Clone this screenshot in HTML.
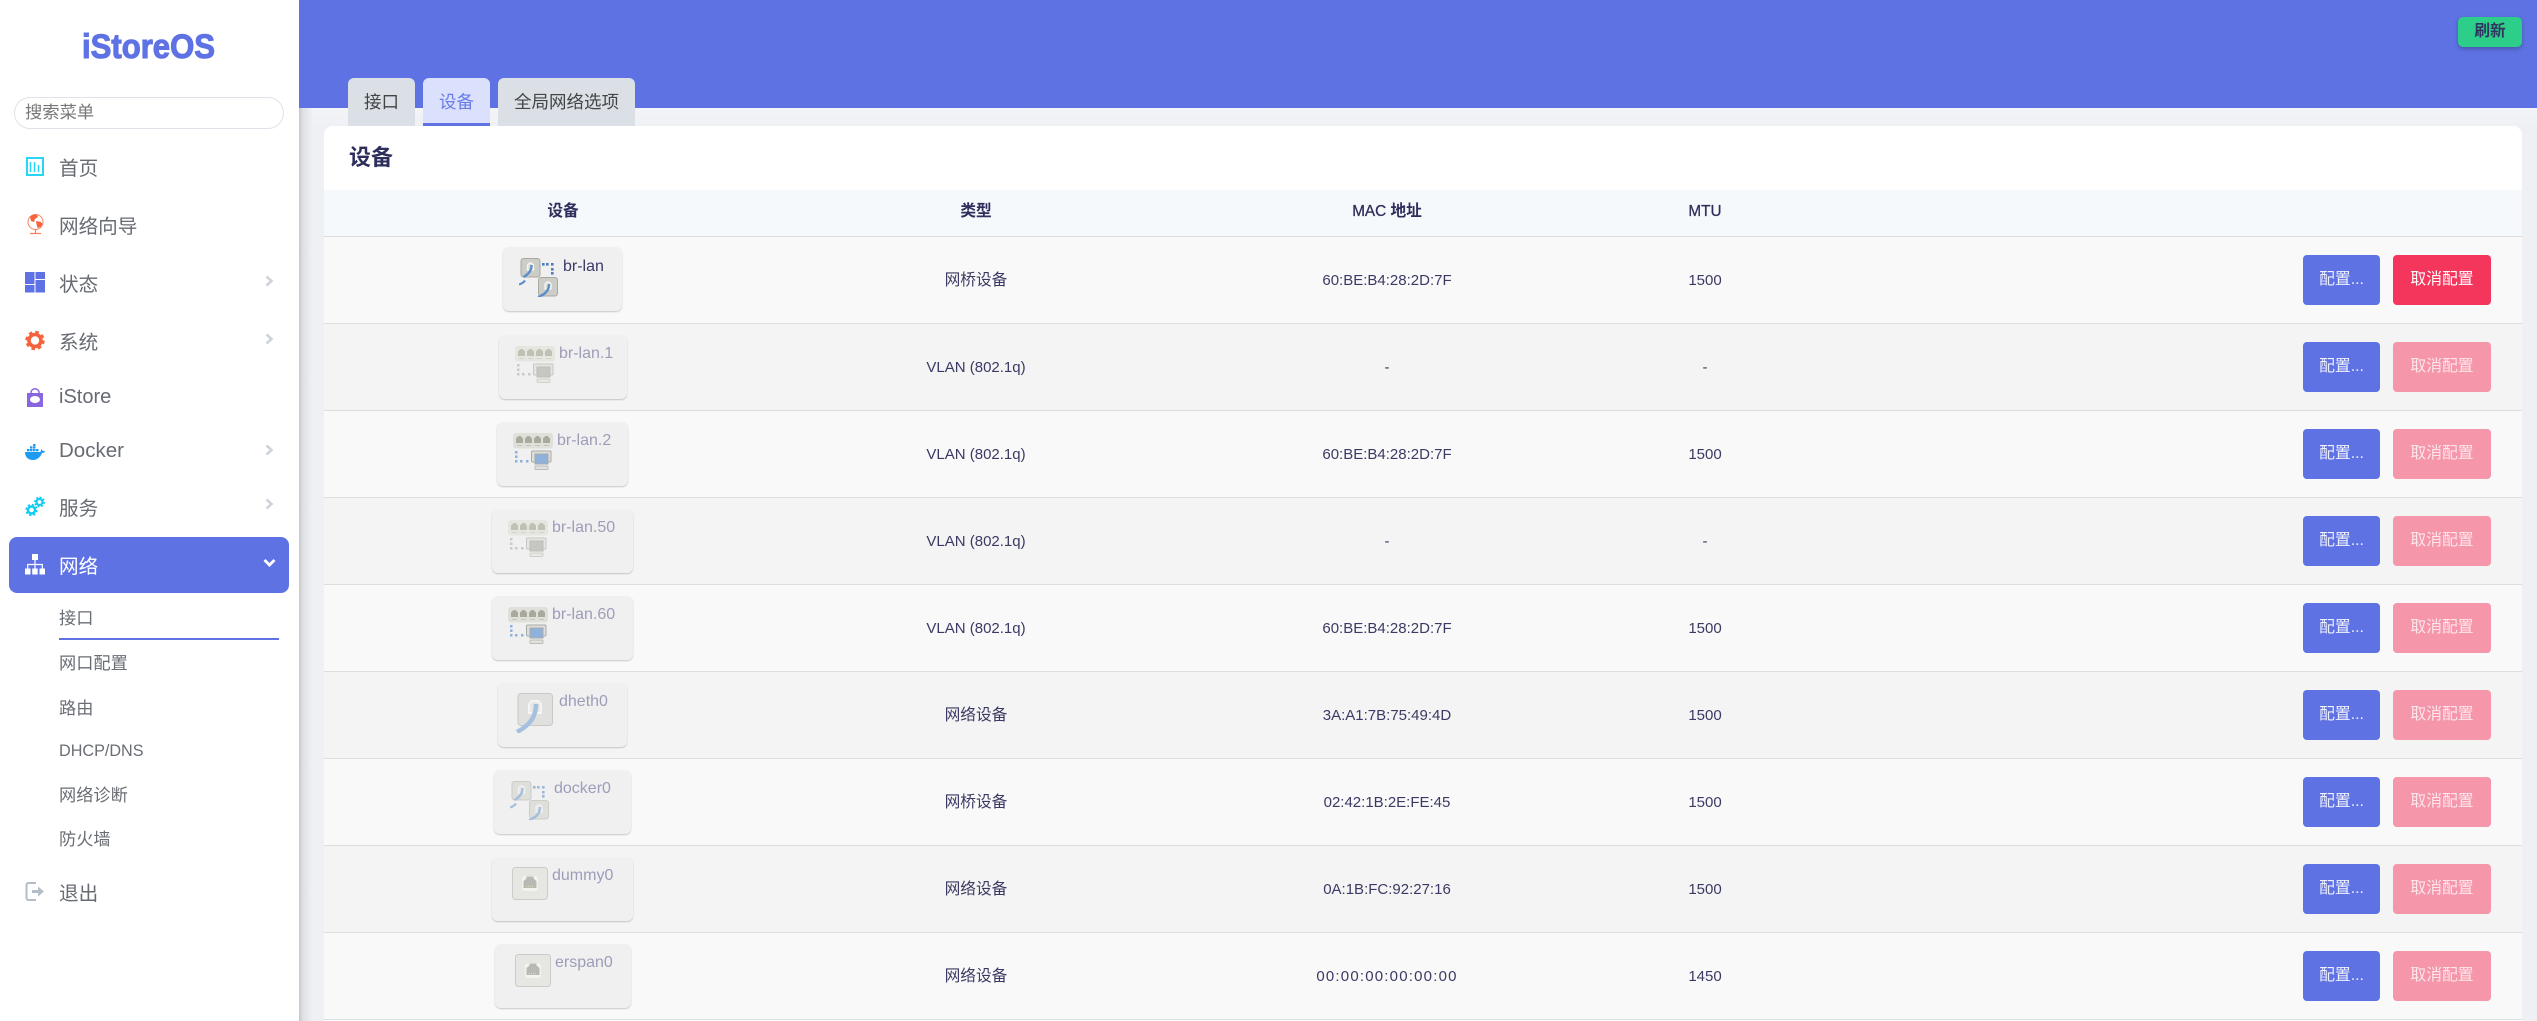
<!DOCTYPE html>
<html lang="zh"><head><meta charset="utf-8"><title>iStoreOS</title>
<style>
html,body{margin:0;padding:0;width:2537px;height:1021px;overflow:hidden;background:#eff0f4;font-family:"Liberation Sans","Noto Sans CJK SC",sans-serif}
.a{position:absolute;white-space:nowrap}
#side{position:absolute;left:0;top:0;width:299px;height:1021px;background:#fff;z-index:3}
#shadow{position:absolute;left:299px;top:108px;width:13px;height:913px;background:linear-gradient(to right,#c6c8cc,#dfe0e4 30%,#eff0f4 100%);z-index:4}
#head{position:absolute;left:299px;top:0;width:2238px;height:108px;background:#5e72e4;z-index:2}
#grad{position:absolute;left:299px;top:108px;width:2238px;height:22px;background:linear-gradient(#f3f4f7,#eff0f4)}
.m{position:absolute;left:59px;font-size:19.6px;line-height:28px;color:#676b72;white-space:nowrap}
.s{position:absolute;left:59px;font-size:17.2px;line-height:26px;color:#696d74;white-space:nowrap}
.ch{position:absolute;left:265px}
.tab{position:absolute;top:78px;height:48px;border-radius:6px 6px 0 0;background:#dae0e6;color:#444;font-size:17.5px;line-height:48px;text-align:center;z-index:3;box-sizing:border-box;padding-bottom:5px}
#card{position:absolute;left:324px;top:126px;width:2198px;height:895px;background:#fff;border-radius:9px 9px 0 0;overflow:hidden;z-index:3}
.r{position:absolute;left:0;width:2198px;height:86px;border-bottom:1.2px solid #dedede}
.c{position:absolute;top:0;line-height:87px;height:86px;font-size:15px;color:#3a3a64;text-align:center;white-space:nowrap;transform:translateX(-50%)}
.cj{font-size:15.7px;line-height:88px}
.d{position:absolute;top:11px;height:64px;background:#f0f0f0;border-radius:6px;box-shadow:0 1px 1.5px rgba(0,0,0,.2);box-sizing:border-box}
.d span{position:absolute;top:8px;font-size:16px;line-height:22px;color:#9d9db9;white-space:nowrap}
.d svg{position:absolute}
.b{position:absolute;top:18px;height:50px;border-radius:4px;color:#fff;font-size:15.8px;line-height:49px;text-align:center;white-space:nowrap}
.b1{left:1979px;width:77px;background:#5e72e4;color:#eef0fd}
.b2{left:2069px;width:98px;background:#f5365c}
.off{background:#f596aa;color:#fde6ea}
</style></head><body>
<svg width="0" height="0" style="position:absolute">
<defs>
<symbol id="eth" viewBox="0 0 20 20">
<rect x=".5" y=".5" width="19" height="18.5" rx="2.5" fill="#cdcdc8" stroke="#a9a9a4"/>
<path d="M7 12V7l2-2h2l2 2v5z" fill="#deded9" stroke="#f5f5f2" stroke-width="1.3"/>
<path d="M11 7c0 6-3 9-8 12" fill="none" stroke="#5b8fcb" stroke-width="2.4"/>
</symbol>
<symbol id="br" viewBox="0 0 39 39">
<use href="#eth" width="20" height="20" x="1.5" y="0"/>
<path d="M0 26.5c3-1 5-2.500 6-4" fill="none" stroke="#5b8fcb" stroke-width="2.200"/>
<use href="#eth" width="20" height="20" x="19" y="19"/>
<path d="M19 39c3-1 4-2 5-3" fill="none" stroke="#5b8fcb" stroke-width="2.200"/>
<g fill="#4b7fc0"><rect x="23" y="5" width="2.600" height="2.600"/><rect x="27" y="5" width="2.600" height="2.600"/><rect x="32" y="5" width="2.600" height="2.600"/><rect x="32" y="10" width="2.600" height="2.600"/><rect x="32" y="14" width="2.600" height="2.600"/></g>
</symbol>
<symbol id="sw" viewBox="0 0 40 37">
<rect width="40" height="15.500" rx="3" fill="#e0e0db"/>
<g fill="#a9a99e"><path d="M3 10V5.500L5.500 3h2L10 5.500V10z"/><path d="M12 10V5.500L14.500 3h2L19 5.500V10z"/><path d="M21 10V5.500L23.500 3h2L28 5.500V10z"/><path d="M30 10V5.500L32.500 3h2L37 5.500V10z"/></g>
<g fill="#c4c4ba"><rect x="4" y="12" width="5" height="1"/><rect x="13" y="12" width="5" height="1"/><rect x="22" y="12" width="5" height="1"/><rect x="31" y="12" width="5" height="1"/></g>
<g fill="#8fb2dc"><rect x="2" y="18" width="2.500" height="2.500"/><rect x="2" y="22.500" width="2.500" height="2.500"/><rect x="2" y="27" width="2.500" height="2.500"/><rect x="7" y="27" width="2.500" height="2.500"/><rect x="13" y="27" width="2.500" height="2.500"/></g>
<rect x="18.500" y="18" width="19.500" height="11" rx="1" fill="#dededa" stroke="#aaaaa6"/>
<rect x="22" y="21" width="13" height="10" fill="#8fb2dc" stroke="#aaaaa6"/>
<rect x="22" y="33" width="13" height="3.500" rx="1" fill="#e2e2dc" stroke="#bbb"/>
</symbol>
<symbol id="swg" viewBox="0 0 40 37">
<rect width="40" height="15.500" rx="3" fill="#e6e6e1"/>
<g fill="#c0c0b5"><path d="M3 10V5.500L5.500 3h2L10 5.500V10z"/><path d="M12 10V5.500L14.500 3h2L19 5.500V10z"/><path d="M21 10V5.500L23.500 3h2L28 5.500V10z"/><path d="M30 10V5.500L32.500 3h2L37 5.500V10z"/></g>
<g fill="#d4d4cb"><rect x="4" y="12" width="5" height="1"/><rect x="13" y="12" width="5" height="1"/><rect x="22" y="12" width="5" height="1"/><rect x="31" y="12" width="5" height="1"/></g>
<g fill="#cacac6"><rect x="2" y="18" width="2.500" height="2.500"/><rect x="2" y="22.500" width="2.500" height="2.500"/><rect x="2" y="27" width="2.500" height="2.500"/><rect x="7" y="27" width="2.500" height="2.500"/><rect x="13" y="27" width="2.500" height="2.500"/></g>
<rect x="18.500" y="18" width="19.500" height="11" rx="1" fill="#e6e6e1" stroke="#c6c6c2"/>
<rect x="22" y="21" width="13" height="10" fill="#c6c6c2" stroke="#bdbdb9"/>
<rect x="22" y="33" width="13" height="3.500" rx="1" fill="#e8e8e3" stroke="#cfcfcb"/>
</symbol>
<symbol id="dum" viewBox="0 0 36 33">
<rect x=".5" y=".5" width="35" height="32" rx="3" fill="#e6e6e3" stroke="#cbcbc8"/>
<rect x="10" y="9" width="16" height="15" rx="3" fill="#f2f2ef"/>
<path d="M11.500 21v-7l3-2.500v-2h7v2l3 2.500v7z" fill="#b8b8b4"/>
<path d="M14 19.500h8" stroke="#d8d3a8" stroke-dasharray="1 1" stroke-width="1.500"/>
</symbol>
<symbol id="chv" viewBox="0 0 9 12"><path d="M1.500 1.500 6.500 6l-5 4.500" fill="none" stroke="#ced4da" stroke-width="2.600"/></symbol>
</defs></svg>

<div id="shadow"></div><div id="head"></div><div id="grad"></div>

<div id="side">
<svg class="a" style="left:80px;top:26px" width="140" height="36"><text x="2" y="32" font-family="Liberation Sans" font-weight="700" font-size="34" fill="#5e72e4" textLength="133" lengthAdjust="spacingAndGlyphs" stroke="#5e72e4" stroke-width="1.100">iStoreOS</text></svg>
<div class="a" style="left:14px;top:97px;width:270px;height:32px;border:1px solid #dfe2e8;border-radius:16px;box-sizing:border-box"></div>
<div class="a" style="left:25px;top:99px;font-size:17.300px;line-height:26px;color:#777">搜索菜单</div>

<svg class="a" style="left:26px;top:157px" width="18" height="19" viewBox="0 0 18 19"><rect x="1" y="1" width="16" height="17" fill="none" stroke="#27d6f5" stroke-width="2"/><path d="M4.500 5v10M8.500 5v10M12.500 8v7" stroke="#27d6f5" stroke-width="1.500"/></svg>
<div class="m" style="top:155px">首页</div>

<svg class="a" style="left:26px;top:214px" width="20" height="21" viewBox="0 0 20 21"><circle cx="9.500" cy="8" r="7.500" fill="#fff" stroke="#f7815e"/><path d="M4 3c2-2 5-3 7-2l1 2-3 2-1 3-3-1zM10 7l5 1 1.500 2-2 3-3 1-1-4z" fill="#f5633c"/><path d="M9.500 16v3M4 19.500h11" stroke="#f7815e" stroke-width="1.200"/></svg>
<div class="m" style="top:213px">网络向导</div>

<svg class="a" style="left:25px;top:272px" width="20" height="21" viewBox="0 0 20 21"><g fill="#5e72e4"><rect width="9.500" height="12"/><rect y="13" width="9.500" height="7.500"/><rect x="10.500" width="9.500" height="7"/><rect x="10.500" y="8" width="9.500" height="12.500"/></g></svg>
<div class="m" style="top:271px">状态</div>
<svg class="ch" style="top:275px" width="9" height="12"><use href="#chv"/></svg>

<svg class="a" style="left:25px;top:330px" width="20" height="21" viewBox="0 0 20 20"><circle cx="10" cy="10" r="6" fill="none" stroke="#f5633c" stroke-width="3.600"/><circle cx="10" cy="10" r="8" fill="none" stroke="#f5633c" stroke-width="3.400" stroke-dasharray="3.300 3"/></svg>
<div class="m" style="top:329px">系统</div>
<svg class="ch" style="top:333px" width="9" height="12"><use href="#chv"/></svg>

<svg class="a" style="left:26px;top:388px" width="18" height="19" viewBox="0 0 18 19"><path d="M1 5h16v14H1z" fill="#8965e0"/><path d="M5 7V4.500a4 3.700 0 0 1 8 0V7" fill="none" stroke="#8965e0" stroke-width="1.500"/><ellipse cx="9" cy="11.500" rx="5" ry="3.500" fill="#fff"/></svg>
<div class="m" style="top:383px;font-size:20px">iStore</div>

<svg class="a" style="left:25px;top:444px" width="20" height="16" viewBox="0 0 20 16"><path d="M0 8h15c1 0 1-2 1-3 1 .5 1.500 1.500 1.500 2 1-.5 2-.3 2.500 0-.5 1.500-1.500 2-3 2-1.500 4-5 7-9 7C3 16 0 13 0 8z" fill="#1d9bf0"/><g fill="#1d9bf0"><rect x="2" y="5" width="2.500" height="2.300"/><rect x="5" y="5" width="2.500" height="2.300"/><rect x="8" y="5" width="2.500" height="2.300"/><rect x="5" y="2.300" width="2.500" height="2.300"/><rect x="8" y="2.300" width="2.500" height="2.300"/><rect x="8" y="0" width="2.500" height="2"/><rect x="11" y="5" width="2.500" height="2.300"/></g></svg>
<div class="m" style="top:437px;font-size:20.500px">Docker</div>
<svg class="ch" style="top:444px" width="9" height="12"><use href="#chv"/></svg>

<svg class="a" style="left:25px;top:496px" width="20" height="21" viewBox="0 0 20 21"><g fill="none" stroke="#11cdef"><circle cx="6.500" cy="14" r="3.500" stroke-width="2.400"/><circle cx="6.500" cy="14" r="5.300" stroke-width="1.800" stroke-dasharray="2.200 2"/><circle cx="14.500" cy="6" r="3" stroke-width="2.200"/><circle cx="14.500" cy="6" r="4.600" stroke-width="1.600" stroke-dasharray="2 1.600"/></g></svg>
<div class="m" style="top:495px">服务</div>
<svg class="ch" style="top:498px" width="9" height="12"><use href="#chv"/></svg>

<div class="a" style="left:9px;top:537px;width:280px;height:56px;background:#5e72e4;border-radius:8px"></div>
<svg class="a" style="left:25px;top:554px" width="20" height="21" viewBox="0 0 20 21"><g fill="#fff"><rect x="7" y="0" width="6" height="6"/><rect x="0" y="14.500" width="5.500" height="6"/><rect x="7.200" y="14.500" width="5.500" height="6"/><rect x="14.500" y="14.500" width="5.500" height="6"/></g><path d="M10 6v8.500M2.700 14.500V10.500h14.600v4" fill="none" stroke="#fff" stroke-width="1.200"/></svg>
<div class="m" style="top:553px;color:#fff">网络</div>
<svg class="a" style="left:263px;top:558px" width="13" height="10" viewBox="0 0 13 10"><path d="M1.500 2 6.500 7l5-5" fill="none" stroke="#fff" stroke-width="2.800"/></svg>

<div class="s" style="top:605px">接口</div>
<div class="a" style="left:59px;top:638px;width:220px;height:2px;background:#5e72e4"></div>
<div class="s" style="top:650px">网口配置</div>
<div class="s" style="top:695px">路由</div>
<div class="s" style="top:738px;font-size:16.200px">DHCP/DNS</div>
<div class="s" style="top:782px">网络诊断</div>
<div class="s" style="top:826px">防火墙</div>

<svg class="a" style="left:25px;top:881px" width="20" height="21" viewBox="0 0 20 21"><path d="M11 2H3.500C2.500 2 1.500 3 1.500 4v13c0 1 1 2 2 2H11" fill="none" stroke="#b4bec8" stroke-width="2"/><path d="M7 9h6V5.500l6 5-6 5V12H7z" fill="#b4bec8"/></svg>
<div class="m" style="top:880px">退出</div>
</div>

<div class="a" style="left:2458px;top:17px;width:64px;height:30px;background:#2dce89;border-radius:5px;box-shadow:0 2px 4px rgba(30,30,70,.35);color:#2f3560;font-weight:700;font-size:15.700px;line-height:30px;text-align:center;z-index:4">刷新</div>

<div class="tab" style="left:348px;width:67px">接口</div>
<div class="tab" style="left:423px;width:67px;background:#dbe1fd;color:#6a7ce8;border-bottom:3px solid #5e72e4;padding-bottom:2px">设备</div>
<div class="tab" style="left:498px;width:137px">全局网络选项</div>

<div id="card">
<div class="a" style="left:25px;top:17px;font-size:22px;font-weight:700;line-height:30px;color:#2e2e5c">设备</div>
<div class="a" style="left:0;top:64px;width:2198px;height:46px;background:#f6f9fc;border-bottom:1.2px solid #dcdcdc"></div>
<div class="a" style="left:239px;top:74px;transform:translateX(-50%);font-size:15.700px;font-weight:700;line-height:24px;color:#2e2e5c">设备</div>
<div class="a" style="left:652px;top:74px;transform:translateX(-50%);font-size:15.700px;font-weight:700;line-height:24px;color:#2e2e5c">类型</div>
<div class="a" style="left:1063px;top:74px;transform:translateX(-50%);font-size:15.300px;line-height:24px;color:#2e2e5c;-webkit-text-stroke:.3px #2e2e5c">MAC <span style="font-size:15.700px;font-weight:700;-webkit-text-stroke:0">地址</span></div>
<div class="a" style="left:1381px;top:74px;transform:translateX(-50%);font-size:15.300px;line-height:24px;color:#2e2e5c;-webkit-text-stroke:.3px #2e2e5c">MTU</div>

<div class="r" style="top:111px;background:#f9f9f9">
<div class="d" style="left:179px;width:119px;top:10px"><svg style="left:16px;top:11px" width="39" height="39"><use href="#br"/></svg><span style="left:60px;top:9px;color:#3a3a68">br-lan</span></div>
<div class="c cj" style="left:652px">网桥设备</div><div class="c" style="left:1063px">60:BE:B4:28:2D:7F</div><div class="c" style="left:1381px">1500</div>
<div class="b b1">配置...</div><div class="b b2">取消配置</div></div>

<div class="r" style="top:198px;background:#f4f4f4">
<div class="d" style="left:175px;width:128px"><svg style="left:16px;top:11px" width="40" height="37"><use href="#swg"/></svg><span style="left:60px">br-lan.1</span></div>
<div class="c" style="left:652px">VLAN (802.1q)</div><div class="c" style="left:1063px">-</div><div class="c" style="left:1381px">-</div>
<div class="b b1">配置...</div><div class="b b2 off">取消配置</div></div>

<div class="r" style="top:285px;background:#f9f9f9">
<div class="d" style="left:173px;width:131px"><svg style="left:16px;top:11px" width="40" height="37"><use href="#sw"/></svg><span style="left:60px">br-lan.2</span></div>
<div class="c" style="left:652px">VLAN (802.1q)</div><div class="c" style="left:1063px">60:BE:B4:28:2D:7F</div><div class="c" style="left:1381px">1500</div>
<div class="b b1">配置...</div><div class="b b2 off">取消配置</div></div>

<div class="r" style="top:372px;background:#f4f4f4">
<div class="d" style="left:168px;width:141px"><svg style="left:16px;top:11px" width="40" height="37"><use href="#swg"/></svg><span style="left:60px">br-lan.50</span></div>
<div class="c" style="left:652px">VLAN (802.1q)</div><div class="c" style="left:1063px">-</div><div class="c" style="left:1381px">-</div>
<div class="b b1">配置...</div><div class="b b2 off">取消配置</div></div>

<div class="r" style="top:459px;background:#f9f9f9">
<div class="d" style="left:168px;width:141px"><svg style="left:16px;top:11px" width="40" height="37"><use href="#sw"/></svg><span style="left:60px">br-lan.60</span></div>
<div class="c" style="left:652px">VLAN (802.1q)</div><div class="c" style="left:1063px">60:BE:B4:28:2D:7F</div><div class="c" style="left:1381px">1500</div>
<div class="b b1">配置...</div><div class="b b2 off">取消配置</div></div>

<div class="r" style="top:546px;background:#f4f4f4">
<div class="d" style="left:174px;width:129px"><svg style="left:18px;top:10px;opacity:.55" width="38" height="40" viewBox="0 0 38 40"><rect x="2" y=".5" width="34.500" height="32" rx="3" fill="#d3d3d0" stroke="#a9a9a6"/><path d="M13 20V11l3-3h6l3 3v9z" fill="#e0e0dc" stroke="#fafafa" stroke-width="2"/><path d="M20 11c0 13-6 21-19 28" fill="none" stroke="#6a9bd2" stroke-width="4.500"/></svg><span style="left:61px">dheth0</span></div>
<div class="c cj" style="left:652px">网络设备</div><div class="c" style="left:1063px">3A:A1:7B:75:49:4D</div><div class="c" style="left:1381px">1500</div>
<div class="b b1">配置...</div><div class="b b2 off">取消配置</div></div>

<div class="r" style="top:633px;background:#f9f9f9">
<div class="d" style="left:170px;width:137px"><svg style="left:16px;top:11px;opacity:.5" width="39" height="39"><use href="#br"/></svg><span style="left:60px">docker0</span></div>
<div class="c cj" style="left:652px">网桥设备</div><div class="c" style="left:1063px">02:42:1B:2E:FE:45</div><div class="c" style="left:1381px">1500</div>
<div class="b b1">配置...</div><div class="b b2 off">取消配置</div></div>

<div class="r" style="top:720px;background:#f4f4f4">
<div class="d" style="left:168px;width:141px"><svg style="left:20px;top:10px" width="36" height="33"><use href="#dum"/></svg><span style="left:60px">dummy0</span></div>
<div class="c cj" style="left:652px">网络设备</div><div class="c" style="left:1063px">0A:1B:FC:92:27:16</div><div class="c" style="left:1381px">1500</div>
<div class="b b1">配置...</div><div class="b b2 off">取消配置</div></div>

<div class="r" style="top:807px;background:#f9f9f9">
<div class="d" style="left:171px;width:136px"><svg style="left:20px;top:10px" width="36" height="33"><use href="#dum"/></svg><span style="left:60px">erspan0</span></div>
<div class="c cj" style="left:652px">网络设备</div><div class="c" style="left:1063px;letter-spacing:1.2px">00:00:00:00:00:00</div><div class="c" style="left:1381px">1450</div>
<div class="b b1">配置...</div><div class="b b2 off">取消配置</div></div>
</div>
</body></html>
